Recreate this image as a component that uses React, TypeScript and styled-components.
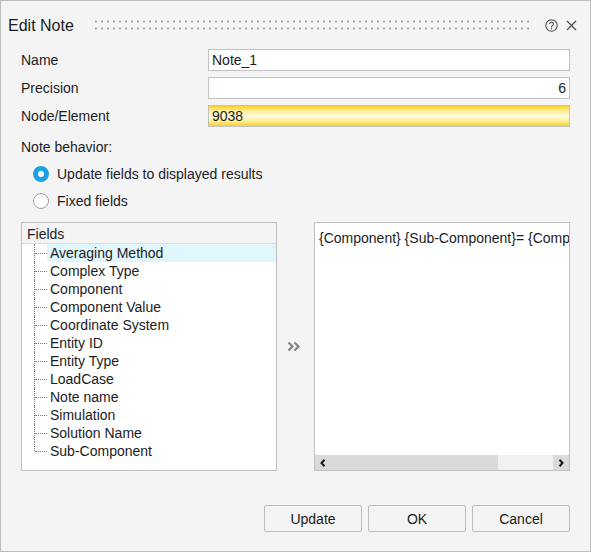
import React, { useState } from 'react';
import styled, { createGlobalStyle } from 'styled-components';

const GlobalStyle = createGlobalStyle`
    html, body {
        margin: 0;
        padding: 0;
        background: #f4f4f4;
    }
    * {
        box-sizing: border-box;
    }
`

const Dialog = styled.div`
    width: 591px;
    height: 552px;
    background: #f4f4f4;
    border: 1px solid #bcbcbc;
    font-family: "Liberation Sans", Arial, sans-serif;
    font-size: 14px;
    color: #1c1c24;
    display: flex;
    flex-direction: column;
`

const TitleBar = styled.div`
    height: 47px;
    display: flex;
    align-items: center;
    padding: 0 12px 0 7px;
`

const Title = styled.span`
    font-size: 16px;
    color: #1a1a24;
    padding-top: 2px;
`

const Grip = styled.div`
    flex: 1;
    height: 14px;
    margin: 0 9px 0 19px;
    background-image: radial-gradient(circle, #a2a2a2 0.9px, transparent 1.3px);
    background-size: 6px 7px;
`

const TitleIcon = styled.span`
    display: flex;
    align-items: center;
    justify-content: center;
    width: 14px;
    height: 14px;
    margin-left: 6px;
    margin-top: 2px;
`

const Form = styled.div`
    display: grid;
    grid-template-columns: 187px 1fr;
    row-gap: 6px;
    padding: 1px 20px 0 20px;
`

const Label = styled.label`
    display: flex;
    align-items: center;
    height: 22px;
`

const Field = styled.input<{ $align?: 'left' | 'right'; $highlight?: boolean }>`
    height: 22px;
    width: 100%;
    border: 1px solid #c2c2c2;
    padding: 0 3px 0 3px;
    font-family: inherit;
    font-size: 14px;
    color: #1a1a1a;
    text-align: ${p => p.$align ?? 'left'};
    background: ${p => p.$highlight
        ? 'linear-gradient(#fcd02a 0%, #ffec8a 22%, #fffbe4 50%, #ffec8a 78%, #fcd02a 100%)'
        : '#ffffff'};
    outline: none;
`

const Section = styled.div`
    padding: 11px 20px 0 20px;
`

const SectionLabel = styled.div`
    height: 18px;
    line-height: 18px;
`

const RadioList = styled.div`
    margin-top: 4px;
    display: flex;
    flex-direction: column;
`

const RadioRow = styled.label`
    display: flex;
    align-items: center;
    height: 27px;
    padding-left: 12px;
    gap: 8px;
    cursor: pointer;
`

const RadioDot = styled.span<{ $checked: boolean }>`
    width: 16px;
    height: 16px;
    border-radius: 50%;
    background: #ffffff;
    border: ${p => p.$checked ? '5px solid #1ba1e2' : '1px solid #9c9c9c'};
`

const Panels = styled.div`
    display: grid;
    grid-template-columns: 256px 37px 256px;
    margin: 8px 20px 0 20px;
    height: 249px;
`

const TreeBox = styled.div`
    border: 1px solid #c0c0c0;
    background: #ffffff;
    display: flex;
    flex-direction: column;
`

const TreeHeader = styled.div`
    height: 21px;
    background: #f4f4f4;
    border-bottom: 1px solid #dcdcdc;
    padding: 1px 0 0 5px;
    display: flex;
    align-items: center;
`

const TreeList = styled.div`
    display: flex;
    flex-direction: column;
`

const TreeRow = styled.div<{ $last?: boolean }>`
    position: relative;
    height: 18px;
    padding-left: 25px;
    display: flex;

    &::before {
        content: '';
        position: absolute;
        left: 12px;
        top: 0;
        height: ${p => p.$last ? '9px' : '18px'};
        border-left: 1px dotted #7a7a7a;
    }

    &::after {
        content: '';
        position: absolute;
        left: 13px;
        top: 9px;
        width: 12px;
        border-top: 1px dotted #7a7a7a;
    }
`

const TreeText = styled.span<{ $selected?: boolean }>`
    flex: 1;
    padding: 1px 0 0 3px;
    line-height: 17px;
    background: ${p => p.$selected ? '#e1f5fc' : 'transparent'};
    white-space: nowrap;
`

const Transfer = styled.div`
    display: flex;
    align-items: center;
    justify-content: flex-start;
    padding-left: 10px;
    padding-bottom: 1px;
`

const OutputBox = styled.div`
    border: 1px solid #c0c0c0;
    background: #ffffff;
    display: flex;
    flex-direction: column;
    overflow: hidden;
`

const OutputText = styled.div`
    flex: 1;
    padding: 6px 0 0 4px;
    line-height: 18px;
    white-space: nowrap;
    overflow: hidden;
`

const HScroll = styled.div`
    height: 15px;
    display: flex;
`

const ScrollButton = styled.div`
    width: 16px;
    background: #dadada;
    display: flex;
    align-items: center;
    justify-content: center;
`

const ScrollThumb = styled.div`
    width: 167px;
    background: #dadada;
`

const ScrollTrack = styled.div`
    flex: 1;
    background: #f1f1f1;
`

const Footer = styled.div`
    margin-top: 34px;
    display: flex;
    justify-content: flex-end;
    gap: 6px;
    padding-right: 20px;
`

const Button = styled.button`
    width: 98px;
    height: 27px;
    border: 1px solid #bcbcbc;
    border-radius: 2px;
    background: #f4f4f4;
    font-family: inherit;
    font-size: 14px;
    color: #1a1a1a;
    cursor: pointer;
`

const fields = [
    'Averaging Method',
    'Complex Type',
    'Component',
    'Component Value',
    'Coordinate System',
    'Entity ID',
    'Entity Type',
    'LoadCase',
    'Note name',
    'Simulation',
    'Solution Name',
    'Sub-Component',
]

const HelpIcon = () => (
    <svg width="13" height="13" viewBox="0 0 13 13">
        <circle cx="6.5" cy="6.5" r="5.7" fill="none" stroke="#505050" strokeWidth="1.1" />
        <path d="M4.6 5.1a1.9 1.9 0 1 1 2.7 1.7c-.6.3-.8.6-.8 1.2v.4" fill="none" stroke="#505050" strokeWidth="1.1" />
        <circle cx="6.5" cy="9.7" r="0.7" fill="#505050" />
    </svg>
)

const CloseIcon = () => (
    <svg width="11" height="11" viewBox="0 0 11 11">
        <path d="M1 1L10 10M10 1L1 10" stroke="#505050" strokeWidth="1.3" />
    </svg>
)

const DoubleChevron = () => (
    <svg width="14" height="11" viewBox="0 0 14 11">
        <path d="M1.5 1.5L5.5 5.5L1.5 9.5M7.5 1.5L11.5 5.5L7.5 9.5" fill="none" stroke="#858585" strokeWidth="2.2" />
    </svg>
)

const Arrow = ({ dir }: { dir: 'left' | 'right' }) => (
    <svg width="6" height="8" viewBox="0 0 6 8">
        <path d={dir === 'left' ? 'M4.5 0.8L1.5 4L4.5 7.2' : 'M1.5 0.8L4.5 4L1.5 7.2'} fill="none" stroke="#1a1a1a" strokeWidth="2" />
    </svg>
)

export default function App() {
    const [mode, setMode] = useState<'update' | 'fixed'>('update');

    return (
        <>
            <GlobalStyle />
            <Dialog>
                <TitleBar>
                    <Title>Edit Note</Title>
                    <Grip />
                    <TitleIcon><HelpIcon /></TitleIcon>
                    <TitleIcon><CloseIcon /></TitleIcon>
                </TitleBar>

                <Form>
                    <Label>Name</Label>
                    <Field defaultValue="Note_1" />
                    <Label>Precision</Label>
                    <Field defaultValue="6" $align="right" />
                    <Label>Node/Element</Label>
                    <Field defaultValue="9038" $highlight />
                </Form>

                <Section>
                    <SectionLabel>Note behavior:</SectionLabel>
                    <RadioList>
                        <RadioRow onClick={() => setMode('update')}>
                            <RadioDot $checked={mode === 'update'} />
                            Update fields to displayed results
                        </RadioRow>
                        <RadioRow onClick={() => setMode('fixed')}>
                            <RadioDot $checked={mode === 'fixed'} />
                            Fixed fields
                        </RadioRow>
                    </RadioList>
                </Section>

                <Panels>
                    <TreeBox>
                        <TreeHeader>Fields</TreeHeader>
                        <TreeList>
                            {fields.map((f, i) => (
                                <TreeRow key={f} $last={i === fields.length - 1}>
                                    <TreeText $selected={i === 0}>{f}</TreeText>
                                </TreeRow>
                            ))}
                        </TreeList>
                    </TreeBox>
                    <Transfer>
                        <DoubleChevron />
                    </Transfer>
                    <OutputBox>
                        <OutputText>{'{Component} {Sub-Component}= {Component Value}'}</OutputText>
                        <HScroll>
                            <ScrollButton><Arrow dir="left" /></ScrollButton>
                            <ScrollThumb />
                            <ScrollTrack />
                            <ScrollButton><Arrow dir="right" /></ScrollButton>
                        </HScroll>
                    </OutputBox>
                </Panels>

                <Footer>
                    <Button>Update</Button>
                    <Button>OK</Button>
                    <Button>Cancel</Button>
                </Footer>
            </Dialog>
        </>
    )
}
